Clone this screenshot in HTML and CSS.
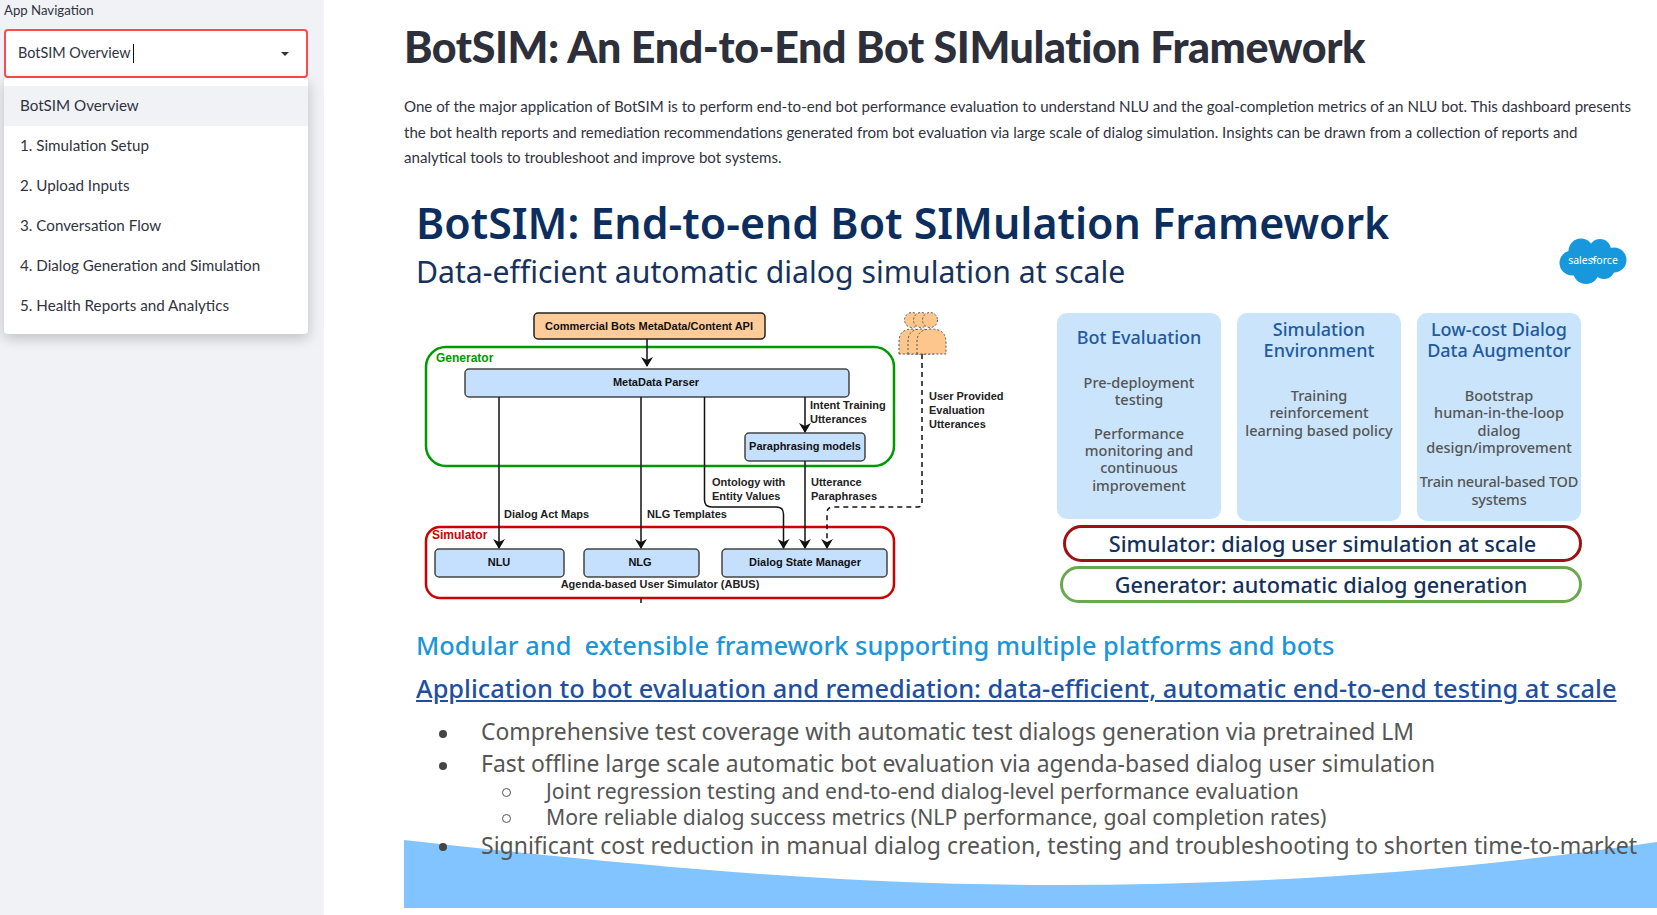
FILE: index.html
```html
<!DOCTYPE html>
<html lang="en">
<head>
    <meta charset="UTF-8">
    <title>BotSIM</title>
    <link rel="stylesheet" href="styles.css">
</head>
<body>
    <aside class="sidebar">
        <div class="nav-label">App Navigation</div>
        <div class="select-box">
            <span class="select-value">BotSIM Overview</span>
            <span class="select-caret"></span>
            <span class="select-arrow"></span>
        </div>
        <ul class="select-menu">
            <li class="menu-item active">BotSIM Overview</li>
            <li class="menu-item">1. Simulation Setup</li>
            <li class="menu-item">2. Upload Inputs</li>
            <li class="menu-item">3. Conversation Flow</li>
            <li class="menu-item">4. Dialog Generation and Simulation</li>
            <li class="menu-item">5. Health Reports and Analytics</li>
        </ul>
    </aside>

    <main class="content">
        <h1 class="page-title">BotSIM: An End-to-End Bot SIMulation Framework</h1>
        <p class="intro">One of the major application of BotSIM is to perform end-to-end bot performance evaluation to understand NLU and the goal-completion metrics of an NLU bot. This dashboard presents the bot health reports and remediation recommendations generated from bot evaluation via large scale of dialog simulation. Insights can be drawn from a collection of reports and analytical tools to troubleshoot and improve bot systems.</p>

        <section class="slide">
            <svg class="wave" viewBox="0 0 1252 68" preserveAspectRatio="none">
                <path d="M0 0 C250 28 450 45 650 45 C850 45 1050 32 1252 2 L1252 68 L0 68 Z" fill="#82c4ff"/>
            </svg>

            <h2 class="slide-title">BotSIM: End-to-end Bot SIMulation Framework</h2>
            <div class="slide-sub">Data-efficient automatic dialog simulation at scale</div>

            <svg class="sf-logo" viewBox="0 0 68 47">
                <g fill="#1798dc">
                    <circle cx="13" cy="25" r="12.5"/>
                    <circle cx="22" cy="13" r="12.5"/>
                    <circle cx="41" cy="12" r="11"/>
                    <circle cx="55" cy="22" r="12.5"/>
                    <circle cx="27" cy="33" r="13"/>
                    <circle cx="45" cy="30" r="11"/>
                </g>
                <text x="34" y="26" text-anchor="middle" class="sf-text">salesforce</text>
            </svg>

            <div class="slide-row">
                <svg class="diagram" width="640" height="310" viewBox="404 300 640 310">
                    <defs>
                        <marker id="headBig" viewBox="0 0 10 12" refX="9" refY="6" markerWidth="10" markerHeight="12" orient="auto" markerUnits="userSpaceOnUse">
                            <path d="M0 0 L10 6 L0 12 L3 6 Z" fill="#111"/>
                        </marker>
                    </defs>

                    <rect class="group-green" x="426" y="347" width="468" height="119" rx="20"/>
                    <rect class="group-red" x="426" y="527" width="468" height="71" rx="14"/>
                    <text class="label-green" x="436" y="362">Generator</text>
                    <text class="label-red" x="432" y="539">Simulator</text>

                    <rect class="box-orange" x="534" y="313" width="231" height="26" rx="4"/>
                    <text class="box-text" x="649" y="330">Commercial Bots MetaData/Content API</text>

                    <rect class="box-blue" x="465" y="369" width="384" height="28" rx="4"/>
                    <text class="box-text" x="656" y="386">MetaData Parser</text>
                    <rect class="box-blue" x="745" y="433" width="120" height="28" rx="4"/>
                    <text class="box-text" x="805" y="450">Paraphrasing models</text>
                    <rect class="box-blue" x="435" y="549" width="129" height="28" rx="4"/>
                    <text class="box-text" x="499" y="566">NLU</text>
                    <rect class="box-blue" x="584" y="549" width="115" height="28" rx="4"/>
                    <text class="box-text" x="640" y="566">NLG</text>
                    <rect class="box-blue" x="722" y="549" width="165" height="28" rx="4"/>
                    <text class="box-text" x="805" y="566">Dialog State Manager</text>

                    <path class="link" d="M647 339 V366" marker-end="url(#headBig)"/>
                    <path class="link" d="M499 397 V548" marker-end="url(#headBig)"/>
                    <path class="link" d="M641 397 V548" marker-end="url(#headBig)"/>
                    <path class="link" d="M704.5 397 V500 Q704.5 507 712 507 H776 Q783.5 507 783.5 514 V548" marker-end="url(#headBig)"/>
                    <path class="link" d="M805 397 V432" marker-end="url(#headBig)"/>
                    <path class="link" d="M805 461 V548" marker-end="url(#headBig)"/>
                    <path class="link-dash" d="M922 354 V503 Q922 507 918 507 H833 Q827 507 827 513 V548" marker-end="url(#headBig)"/>
                    <path class="link" d="M641 598 V603"/>

                    <g class="person">
                        <circle cx="912" cy="320" r="7.5"/>
                        <path d="M899 354 V342 Q899 329 912 329 Q926 329 926 342 V354 Z"/>
                        <circle cx="921" cy="320" r="7.5"/>
                        <path d="M908 354 V342 Q908 329 921 329 Q935 329 935 342 V354 Z"/>
                        <circle cx="930" cy="320" r="7.5"/>
                        <path d="M917 354 V342 Q917 329 931 329 Q946 329 946 342 V354 Z"/>
                    </g>

                    <text class="edge-text" x="810" y="409">Intent Training</text>
                    <text class="edge-text" x="810" y="423">Utterances</text>
                    <text class="edge-text" x="712" y="486">Ontology with</text>
                    <text class="edge-text" x="712" y="500">Entity Values</text>
                    <text class="edge-text" x="811" y="486">Utterance</text>
                    <text class="edge-text" x="811" y="500">Paraphrases</text>
                    <text class="edge-text" x="504" y="518">Dialog Act Maps</text>
                    <text class="edge-text" x="647" y="518">NLG Templates</text>
                    <text class="edge-text" x="929" y="400">User Provided</text>
                    <text class="edge-text" x="929" y="414">Evaluation</text>
                    <text class="edge-text" x="929" y="428">Utterances</text>
                    <text class="edge-text edge-center" x="660" y="588">Agenda-based User Simulator (ABUS)</text>
                </svg>

                <div class="feature-col">
                    <div class="cards">
                        <div class="card card-short">
                            <h3 class="card-title card-title-single">Bot Evaluation</h3>
                            <p class="card-body first">Pre-deployment<br>testing</p>
                            <p class="card-body">Performance<br>monitoring and<br>continuous<br>improvement</p>
                        </div>
                        <div class="card">
                            <h3 class="card-title">Simulation<br>Environment</h3>
                            <p class="card-body second">Training<br>reinforcement<br>learning based policy</p>
                        </div>
                        <div class="card">
                            <h3 class="card-title">Low-cost Dialog<br>Data Augmentor</h3>
                            <p class="card-body second">Bootstrap<br>human-in-the-loop<br>dialog<br>design/improvement</p>
                            <p class="card-body tight">Train neural-based TOD<br>systems</p>
                        </div>
                    </div>
                    <div class="pill pill-red">Simulator: dialog user simulation at scale</div>
                    <div class="pill pill-green">Generator: automatic dialog generation</div>
                </div>
            </div>

            <div class="tagline">Modular and&nbsp; extensible framework supporting multiple platforms and bots</div>
            <div class="app-line">Application to bot evaluation and remediation: data-efficient, automatic end-to-end testing at scale</div>

            <ul class="points">
                <li class="point">Comprehensive test coverage with automatic test dialogs generation via pretrained LM</li>
                <li class="point">Fast offline large scale automatic bot evaluation via agenda-based dialog user simulation</li>
                <li class="subpoint subpoint-first">Joint regression testing and end-to-end dialog-level performance evaluation</li>
                <li class="subpoint">More reliable dialog success metrics (NLP performance, goal completion rates)</li>
                <li class="point point-last">Significant cost reduction in manual dialog creation, testing and troubleshooting to shorten time-to-market</li>
            </ul>
        </section>
    </main>
</body>
</html>
```

FILE: styles.css
```css
* {
    box-sizing: border-box;
}

body {
    margin: 0;
    height: 915px;
    overflow: hidden;
    display: flex;
    background: white;
    font-family: "Lato", "Noto Sans", sans-serif;
    color: #31333f;
}

.sidebar {
    position: relative;
    width: 324px;
    flex-shrink: 0;
    background: #f0f2f6;
    padding: 0 16px 0 4px;
}

.nav-label {
    height: 29px;
    padding-top: 1px;
    font-size: 13.2px;
    line-height: 18px;
}

.select-box {
    display: flex;
    align-items: center;
    height: 49px;
    padding: 0 17px 0 12px;
    background: white;
    border: 2px solid #ff4b4b;
    border-radius: 4px;
    font-size: 14.4px;
}

.select-value {
    position: relative;
    top: -1px;
}

.select-caret {
    width: 1px;
    height: 19px;
    margin-left: 2px;
    background: #111;
}

.select-arrow {
    margin-left: auto;
    border-left: 4px solid transparent;
    border-right: 4px solid transparent;
    border-top: 4px solid #31333f;
}

.select-menu {
    position: absolute;
    top: 78px;
    left: 4px;
    width: 304px;
    margin: 0;
    padding: 8px 0;
    list-style: none;
    background: white;
    border-radius: 4px;
    box-shadow: 0 4px 14px rgba(0, 0, 0, 0.22);
}

.menu-item {
    height: 40px;
    padding-left: 16px;
    font-size: 15.2px;
    line-height: 38px;
}

.menu-item.active {
    background: #f0f2f6;
}

.content {
    flex: 1;
    min-width: 0;
    display: flex;
    flex-direction: column;
    padding: 0 0 7px 80px;
}

.page-title {
    margin: 20px 0 0;
    font-size: 43px;
    line-height: 54px;
    font-weight: 900;
    letter-spacing: -0.4px;
    color: #2d2f3a;
}

.intro {
    margin: 20px 0 0;
    width: 1232px;
    font-size: 15.1px;
    line-height: 25.7px;
}

.slide {
    position: relative;
    flex: 1;
    margin-top: 23px;
    padding-left: 12px;
    font-family: "Noto Sans", sans-serif;
}

.wave {
    position: absolute;
    left: 0;
    bottom: 0;
    width: 100%;
    height: 68px;
}

.slide-title {
    margin: 0;
    font-size: 42.9px;
    line-height: 57px;
    font-weight: 600;
    color: #0b2e5f;
}

.slide-sub {
    font-size: 30.2px;
    line-height: 42px;
    color: #16325c;
}

.sf-logo {
    position: absolute;
    top: 44px;
    left: 1155px;
    width: 68px;
    height: 47px;
}

.sf-text {
    font-size: 10.5px;
    fill: white;
}

.slide-row {
    display: flex;
    margin: 7px 0 0 -12px;
}

.diagram {
    flex-shrink: 0;
    font-family: "Liberation Sans", Arial, sans-serif;
}

.group-green {
    fill: none;
    stroke: #009900;
    stroke-width: 2.5;
}

.group-red {
    fill: none;
    stroke: #cc0000;
    stroke-width: 2.5;
}

.label-green {
    font-size: 12px;
    font-weight: bold;
    fill: #009900;
}

.label-red {
    font-size: 12px;
    font-weight: bold;
    fill: #cc0000;
}

.box-orange {
    fill: #ffcc99;
    stroke: #222;
    stroke-width: 1.5;
}

.box-blue {
    fill: #c5dfff;
    stroke: #444;
    stroke-width: 1.5;
}

.box-text {
    font-size: 11px;
    font-weight: bold;
    text-anchor: middle;
    fill: #111;
}

.edge-text {
    font-size: 11px;
    font-weight: bold;
    fill: #222;
}

.edge-center {
    text-anchor: middle;
}

.link {
    fill: none;
    stroke: #111;
    stroke-width: 1.5;
}

.link-dash {
    fill: none;
    stroke: #111;
    stroke-width: 1.5;
    stroke-dasharray: 5 4;
}

.person circle,
.person path {
    fill: #fcc68c;
    stroke: #555;
    stroke-width: 1;
    stroke-dasharray: 2 2;
}

.feature-col {
    padding: 13px 0 0 13px;
    width: 538px;
}

.cards {
    display: flex;
    gap: 16px;
    align-items: flex-start;
}

.card {
    width: 164px;
    height: 208px;
    padding: 6px 0 0;
    background: #c9e4fb;
    border-radius: 10px;
    text-align: center;
}

.card-short {
    height: 206px;
}

.card-title {
    margin: 0;
    font-size: 18px;
    line-height: 21px;
    font-weight: 500;
    color: #1f5aa0;
}

.card-title-single {
    padding-top: 8px;
}

.card-body {
    margin: 16px 0 0;
    font-size: 14.5px;
    line-height: 17.3px;
    font-weight: 500;
    color: #555;
}

.card-body.first {
    margin-top: 26px;
}

.card-body.second {
    margin-top: 26px;
}

.card-body.tight {
    margin-top: 17px;
    letter-spacing: -0.2px;
}

.pill {
    height: 37px;
    border-radius: 19px;
    background: white;
    text-align: center;
    font-size: 21.7px;
    line-height: 31px;
    font-weight: 500;
    color: #14305c;
}

.pill-red {
    margin: 4px 0 0 6px;
    border: 3px solid #a01010;
}

.pill-green {
    margin: 4px 0 0 3px;
    border: 3px solid #6aa84f;
}

.tagline {
    margin-top: 17px;
    font-size: 25.4px;
    line-height: 36px;
    font-weight: 500;
    color: #1b96d8;
}

.app-line {
    margin-top: 7px;
    font-size: 25.4px;
    line-height: 36px;
    font-weight: 500;
    color: #1f4fa0;
    text-decoration: underline;
}

.points {
    position: relative;
    margin: 10px 0 0;
    padding: 0;
    list-style: none;
    color: #555;
}

.point {
    position: relative;
    padding-left: 65px;
    font-size: 22.9px;
    line-height: 32px;
    white-space: nowrap;
}

.point::before {
    content: "";
    position: absolute;
    left: 23px;
    top: 14px;
    width: 8px;
    height: 8px;
    border-radius: 50%;
    background: #444;
}

.point-last {
    margin-top: -1px;
    font-size: 23px;
}

.subpoint {
    position: relative;
    padding-left: 130px;
    font-size: 21.2px;
    line-height: 26px;
    white-space: nowrap;
}

.subpoint-first {
    margin-top: -2px;
}

.subpoint::before {
    content: "";
    position: absolute;
    left: 86px;
    top: 10px;
    width: 7px;
    height: 7px;
    border-radius: 50%;
    border: 1px solid #555;
}
```
